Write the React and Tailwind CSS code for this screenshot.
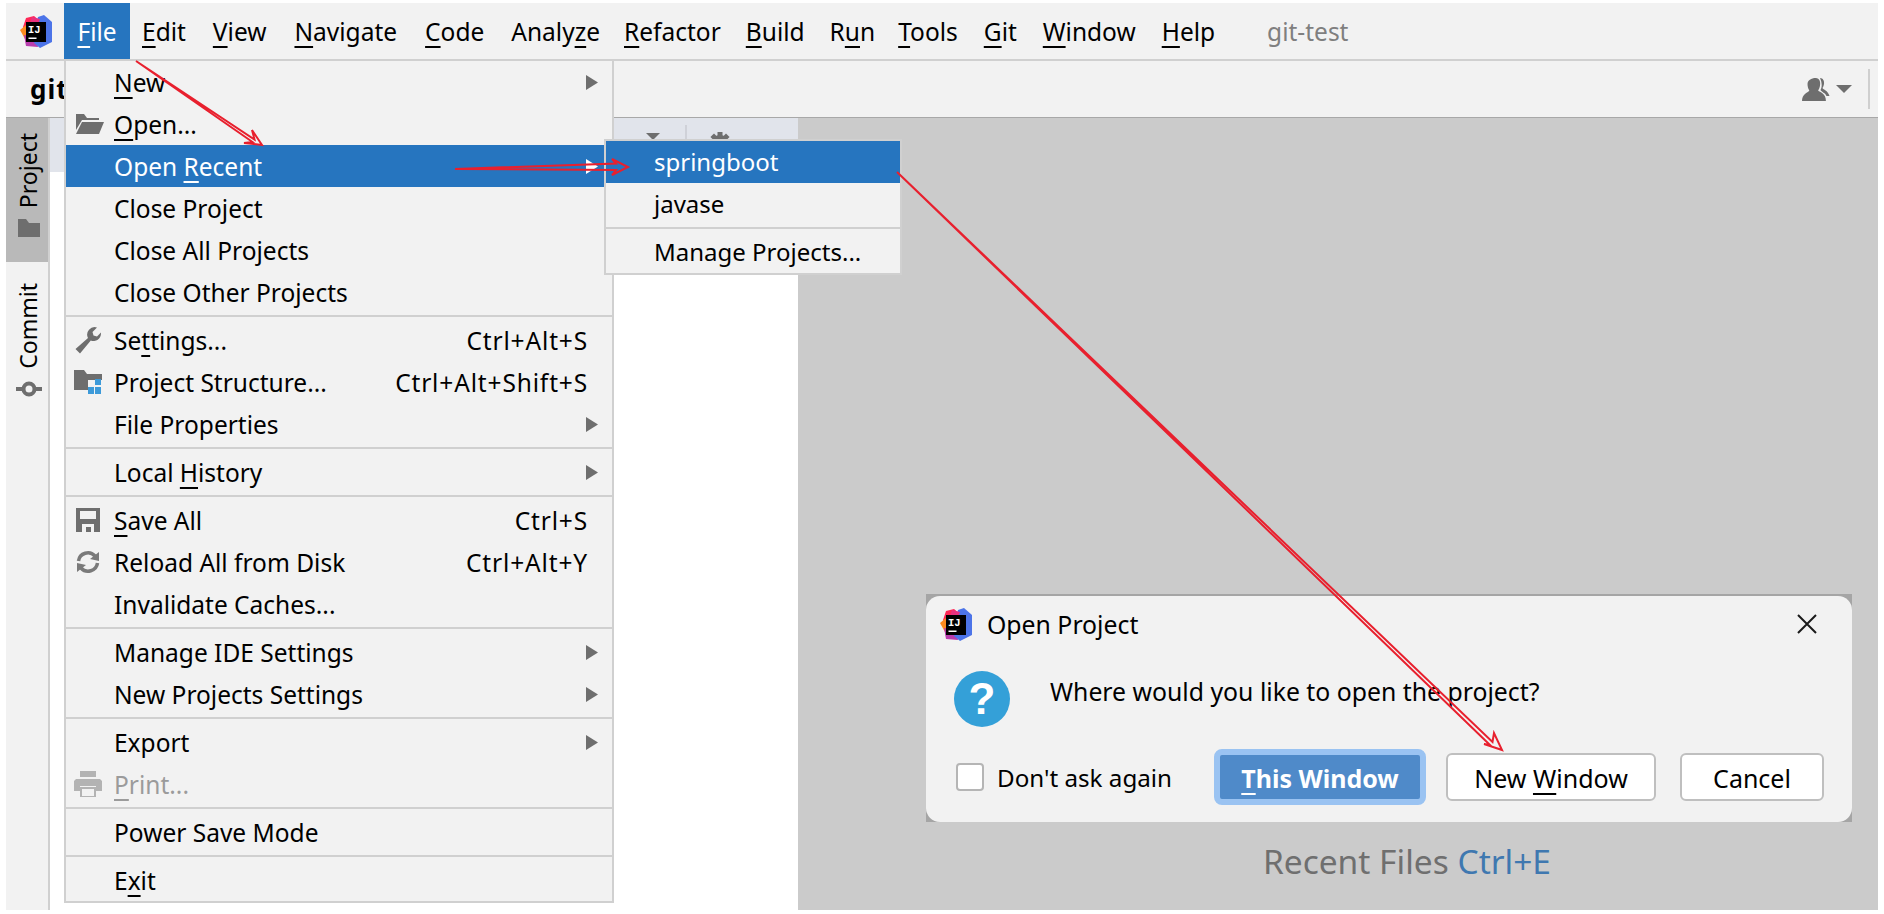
import React from "react";

const FONT = "font-['Noto_Sans','Open_Sans',sans-serif]";

function IdeaLogo({ className }) {
  return (
    <svg viewBox="0 0 32 33" className={className}>
      <polygon points="6,3 14,1 20,6 6,22 3,12" fill="#fe2857" />
      <polygon points="0,15 6,10 10,24 5,24" fill="#fd8b20" />
      <polygon points="4,20 16,22 18,32 6,31" fill="#b93dae" />
      <polygon points="18,2 24,0 32,7 32,27 20,33 14,28 16,10" fill="#4c74e8" />
      <polygon points="12,2 20,4 18,10 10,8" fill="#e8317f" />
      <rect x="6" y="7" width="20" height="20" fill="#000" />
      <text x="8" y="18" fill="#fff" fontSize="10.5" fontWeight="700" fontFamily="Liberation Mono, monospace">IJ</text>
      <rect x="8.5" y="22.5" width="8" height="1.5" fill="#fff" />
    </svg>
  );
}

function Arrow({ active }) {
  return (
    <svg viewBox="0 0 12 15" className="w-[12px] h-[15px]">
      <polygon points="0,0 12,7.5 0,15" fill={active ? "#ffffff" : "#6e6e6e"} />
    </svg>
  );
}

function FolderOpen() {
  return (
    <svg viewBox="0 0 28 20" className="ml-[3px] w-[28px] h-[20px]">
      <path d="M0 0h8l3 4h12v2H6L0 16z" fill="#6e6e6e" />
      <path d="M6 8h22l-5 12H0z" fill="#6e6e6e" />
    </svg>
  );
}

function Wrench() {
  return (
    <svg viewBox="0 0 27 27" className="w-[27px] h-[27px]">
      <path d="M26 6.5a7.5 7.5 0 0 1-10.2 7L5 26.5 0.5 22 13 11a7.5 7.5 0 0 1 9-10.500l-4.500 4.500 1 3.500 3.500 1 4-4z" fill="#6e6e6e" />
    </svg>
  );
}

function StructureIcon() {
  return (
    <svg viewBox="0 0 28 24" className="w-[28px] h-[24px]">
      <path d="M0 0h10l3 4h15v6H14v10H0z" fill="#6e6e6e" />
      <rect x="21" y="9" width="6" height="6" fill="#3d9ad9" />
      <rect x="14" y="17" width="6" height="7" fill="#3d9ad9" />
      <rect x="21" y="17" width="6" height="7" fill="#3d9ad9" />
    </svg>
  );
}

function SaveIcon() {
  return (
    <svg viewBox="0 0 24 24" className="w-[24px] h-[24px]">
      <path d="M0 0h24v24H0z" fill="#6e6e6e" />
      <rect x="4" y="3" width="16" height="8" fill="#f2f2f2" />
      <rect x="6" y="16" width="12" height="8" fill="#f2f2f2" />
      <rect x="10" y="19" width="5" height="5" fill="#6e6e6e" />
    </svg>
  );
}

function ReloadIcon() {
  return (
    <svg viewBox="0 0 24 24" className="w-[24px] h-[24px]" fill="none" stroke="#7a7a7a" strokeWidth="3.500">
      <path d="M2.500 11A9.500 9.500 0 0 1 19 6" />
      <path d="M21.500 13A9.500 9.500 0 0 1 5 18" />
      <polygon points="23,2 23,11 14,9" fill="#7a7a7a" stroke="none" />
      <polygon points="1,22 1,13 10,15" fill="#7a7a7a" stroke="none" />
    </svg>
  );
}

function PrintIcon() {
  return (
    <svg viewBox="0 0 28 26" className="w-[28px] h-[26px]">
      <rect x="6" y="0" width="16" height="6" fill="#b3b3b3" />
      <path d="M2 8h24l2 2v10h-6v-5H6v5H0V10z" fill="#b3b3b3" />
      <path d="M7 17h14v9H7z" fill="none" stroke="#b3b3b3" strokeWidth="2" />
    </svg>
  );
}

function GearIcon() {
  return (
    <svg viewBox="0 0 22 22" className="w-[22px] h-[22px]" fill="#6e6e6e">
      <circle cx="11" cy="11" r="8" />
      <rect x="8.500" y="0" width="5" height="22" />
      <rect x="0" y="8.500" width="22" height="5" />
      <rect x="8.500" y="0" width="5" height="22" transform="rotate(45 11 11)" />
      <rect x="8.500" y="0" width="5" height="22" transform="rotate(-45 11 11)" />
    </svg>
  );
}

function MenuRow({ icon, children, shortcut, sub, active, disabled }) {
  return (
    <div
      className={`h-[42px] flex items-center pr-[14px] ${active ? "bg-[#2675bf] text-white" : disabled ? "text-[#9b9b9b]" : "text-black"}`}
    >
      <div className="w-[48px] shrink-0 flex justify-center pr-[4px]">{icon}</div>
      <div className="flex-1 pt-[2px]">{children}</div>
      {shortcut && <div className="pr-[10px] pt-[2px] tracking-[0.85px]">{shortcut}</div>}
      {sub && <Arrow active={active} />}
    </div>
  );
}

function Sep() {
  return (
    <div className="h-[6px] flex items-center">
      <div className="h-[2px] w-full bg-[#d0d0d0]" />
    </div>
  );
}

const U = ({ children }) => (
  <span className="underline decoration-2 underline-offset-[5px]">{children}</span>
);

function BarItem({ children, active, className = "" }) {
  return (
    <div className={`h-full flex items-center pt-[2px] ${active ? "bg-[#2675bf] text-white" : "text-black"} ${className}`}>
      {children}
    </div>
  );
}

function FileMenu() {
  return (
    <div className="absolute left-[64px] top-[59px] w-[550px] border-2 border-[#d0d0d0] bg-[#f2f2f2] text-[24.5px]">
      <MenuRow sub><U>N</U>ew</MenuRow>
      <MenuRow icon={<FolderOpen />}><U>O</U>pen...</MenuRow>
      <MenuRow sub active>Open <U>R</U>ecent</MenuRow>
      <MenuRow>Close Project</MenuRow>
      <MenuRow>Close All Projects</MenuRow>
      <MenuRow>Close Other Projects</MenuRow>
      <Sep />
      <MenuRow icon={<Wrench />} shortcut="Ctrl+Alt+S">Se<U>t</U>tings...</MenuRow>
      <MenuRow icon={<StructureIcon />} shortcut="Ctrl+Alt+Shift+S">Project Structure...</MenuRow>
      <MenuRow sub>File Properties</MenuRow>
      <Sep />
      <MenuRow sub>Local <U>H</U>istory</MenuRow>
      <Sep />
      <MenuRow icon={<SaveIcon />} shortcut="Ctrl+S"><U>S</U>ave All</MenuRow>
      <MenuRow icon={<ReloadIcon />} shortcut="Ctrl+Alt+Y">Reload All from Disk</MenuRow>
      <MenuRow>Invalidate Caches...</MenuRow>
      <Sep />
      <MenuRow sub>Manage IDE Settings</MenuRow>
      <MenuRow sub>New Projects Settings</MenuRow>
      <Sep />
      <MenuRow sub>Export</MenuRow>
      <MenuRow icon={<PrintIcon />} disabled><U>P</U>rint...</MenuRow>
      <Sep />
      <MenuRow>Power Save Mode</MenuRow>
      <Sep />
      <MenuRow>E<U>x</U>it</MenuRow>
    </div>
  );
}

function RecentMenu() {
  return (
    <div className="absolute left-[604px] top-[139px] w-[298px] border-2 border-[#d0d0d0] bg-[#f2f2f2] text-[24px]">
      <div className="h-[42px] flex items-center pl-[48px] bg-[#2675bf] text-white">springboot</div>
      <div className="h-[42px] flex items-center pl-[48px]">javase</div>
      <Sep />
      <div className="h-[42px] flex items-center pl-[48px]">Manage Projects...</div>
    </div>
  );
}

function OpenDialog() {
  return (
    <div className="absolute left-[926px] top-[594px] w-[926px] h-[228px] bg-[#a5a5a5] pt-[2px] text-[24.8px]">
      <div className="h-full bg-[#f2f2f2] rounded-[14px] flex flex-col text-black">
        <div className="h-[56px] flex items-center pl-[14px] pr-[35px]">
          <IdeaLogo className="w-[32px] h-[33px]" />
          <div className="ml-[15px] flex-1 pt-[2px]">Open Project</div>
          <svg viewBox="0 0 20 20" className="w-[20px] h-[20px]" stroke="#1a1a1a" strokeWidth="2">
            <path d="M1 1l18 18M19 1L1 19" />
          </svg>
        </div>
        <div className="flex pl-[28px] mt-[19px]">
          <div className="w-[56px] h-[56px] rounded-full bg-[#34a0d8] flex items-center justify-center text-white text-[44px] font-bold leading-none font-['Liberation_Sans',sans-serif]">?</div>
          <div className="ml-[40px] leading-[40px]">Where would you like to open the project?</div>
        </div>
        <div className="mt-auto pb-[17px] pl-[30px] pr-[28px] flex items-center">
          <div className="w-[28px] h-[28px] bg-white border-2 border-[#b5b5b5] rounded-[4px]" />
          <div className="ml-[13px] pt-[3px] text-[24.2px]">Don't ask again</div>
          <div className="ml-auto flex items-center">
            <div className="w-[212px] h-[56px] rounded-[8px] border-[6px] border-[#9ac3f2] bg-[#4f8ac9] text-white font-bold text-[25px] flex items-center justify-center pt-[3px]">
              <span><U>T</U>his Window</span>
            </div>
            <div className="ml-[20px] w-[210px] h-[48px] rounded-[6px] border-2 border-[#bfbfbf] bg-white flex items-center justify-center text-[25px] pt-[3px]">
              <span>New <U>W</U>indow</span>
            </div>
            <div className="ml-[24px] w-[144px] h-[48px] rounded-[6px] border-2 border-[#bfbfbf] bg-white flex items-center justify-center text-[25px] pt-[3px]">
              Cancel
            </div>
          </div>
        </div>
      </div>
    </div>
  );
}

function Annotations() {
  const red = "#e8202e";
  return (
    <svg className="absolute inset-0 w-[1884px] h-[914px] pointer-events-none" viewBox="0 0 1884 914" fill="none" stroke={red} strokeWidth="2">
      <polygon points="136,61 254.500,139.500 252,130 262,145 244,143 252.500,142" />
      <polygon points="455,169 616,163.500 612,159 628,167 612,175 616,170" />
      <polygon points="897,172 1492.500,742 1494,733 1502,750 1484,744 1490,745" />
    </svg>
  );
}

export default function App() {
  return (
    <div className={`relative w-[1884px] h-[914px] overflow-hidden bg-white pt-[3px] pl-[6px] pr-[6px] pb-[4px] flex flex-col text-[24.5px] text-black ${FONT}`}>
      <div className="h-[58px] shrink-0 flex items-center bg-[#f2f2f2] border-b-2 border-[#d0d0d0]">
        <div className="w-[58px] flex justify-center pl-[2px]">
          <IdeaLogo className="w-[32px] h-[33px]" />
        </div>
        <BarItem active className="w-[66px] justify-center"><span><U>F</U>ile</span></BarItem>
        <BarItem className="ml-[12px]"><span><U>E</U>dit</span></BarItem>
        <BarItem className="ml-[27px]"><span><U>V</U>iew</span></BarItem>
        <BarItem className="ml-[28px]"><span><U>N</U>avigate</span></BarItem>
        <BarItem className="ml-[28px]"><span><U>C</U>ode</span></BarItem>
        <BarItem className="ml-[27px]"><span>Analy<U>z</U>e</span></BarItem>
        <BarItem className="ml-[24px]"><span><U>R</U>efactor</span></BarItem>
        <BarItem className="ml-[25px]"><span><U>B</U>uild</span></BarItem>
        <BarItem className="ml-[25px]"><span>R<U>u</U>n</span></BarItem>
        <BarItem className="ml-[23px]"><span><U>T</U>ools</span></BarItem>
        <BarItem className="ml-[26px]"><span><U>G</U>it</span></BarItem>
        <BarItem className="ml-[26px]"><span><U>W</U>indow</span></BarItem>
        <BarItem className="ml-[26px]"><span><U>H</U>elp</span></BarItem>
        <div className="ml-[52px] pt-[2px] text-[#7f7f7f]">git-test</div>
      </div>

      <div className="h-[57px] shrink-0 flex items-center bg-[#f2f2f2] border-b border-[#a8a8a8] pl-[24px] pr-[8px]">
        <div className="font-bold flex-1 text-[26px] tracking-[1px]">git</div>
        <svg viewBox="0 0 28 23" className="w-[28px] h-[23px]">
          <path d="M15 0c4 0 5.500 4 4.500 8-.4 2-1 3-2 4.500 2 2 8.500 2.500 8.500 10.500H0c0-7 6-8 8-10.500C6.500 10.500 6 8 6 6c0-3.500 4-6 9-6z" fill="#6e6e6e" transform="translate(-0 0) scale(.92 1)" />
          <path d="M18 0c3 0 4.500 3 4 6-.3 2-1 3-1.500 4 1 2 5 2 7 8h-3c-1-3-5-4-6-6 1-2 1.500-4 1-7-.2-2-1-4-1.500-5z" fill="#6e6e6e" />
        </svg>
        <svg viewBox="0 0 16 8" className="ml-[6px] w-[16px] h-[8px]">
          <polygon points="0,0 16,0 8,8" fill="#6e6e6e" />
        </svg>
        <div className="ml-[16px] w-[2px] h-[40px] bg-[#cfcfcf]" />
      </div>

      <div className="flex-1 flex min-h-0">
        <div className="w-[44px] shrink-0 bg-[#f2f2f2] border-r-2 border-[#d0d0d0] flex flex-col text-[23px]">
          <div className="h-[144px] bg-[#b9b9b9] flex flex-col items-center pt-[15px] pl-[3px]">
            <div className="[writing-mode:vertical-rl] rotate-180 leading-none">Project</div>
            <svg viewBox="0 0 22 18" className="mt-[11px] w-[22px] h-[18px]">
              <path d="M0 0h8l3 4h11v14H0z" fill="#6e6e6e" />
            </svg>
          </div>
          <div className="flex flex-col items-center pt-[21px] pl-[3px]">
            <div className="[writing-mode:vertical-rl] rotate-180 leading-none">Commit</div>
            <svg viewBox="0 0 26 16" className="mt-[12px] w-[26px] h-[16px]" fill="none" stroke="#6e6e6e" strokeWidth="4">
              <circle cx="13" cy="8" r="5.500" />
              <path d="M0 8h6M20 8h6" />
            </svg>
          </div>
        </div>
        <div className="w-[748px] shrink-0 bg-white flex flex-col">
          <div className="h-[54px] bg-[#e1e4eb] flex items-start justify-end pr-[67px] pt-[7px]">
            <svg viewBox="0 0 14 7" className="mt-[8px] w-[14px] h-[7px]">
              <polygon points="0,0 14,0 7,7" fill="#6e6e6e" />
            </svg>
            <div className="ml-[25px] w-[2px] h-[40px] bg-[#cfd1d8]" />
            <div className="ml-[22px] mt-[7px]"><GearIcon /></div>
          </div>
        </div>
        <div className="flex-1 bg-[#cbcbcb] flex items-end justify-end pr-[327px] pb-[29px]">
          <div className="text-[33.5px] leading-[40px] text-[#6f6f6f]">
            Recent Files <span className="text-[#3f78b0]">Ctrl+E</span>
          </div>
        </div>
      </div>

      <FileMenu />
      <RecentMenu />
      <OpenDialog />
      <Annotations />
    </div>
  );
}
